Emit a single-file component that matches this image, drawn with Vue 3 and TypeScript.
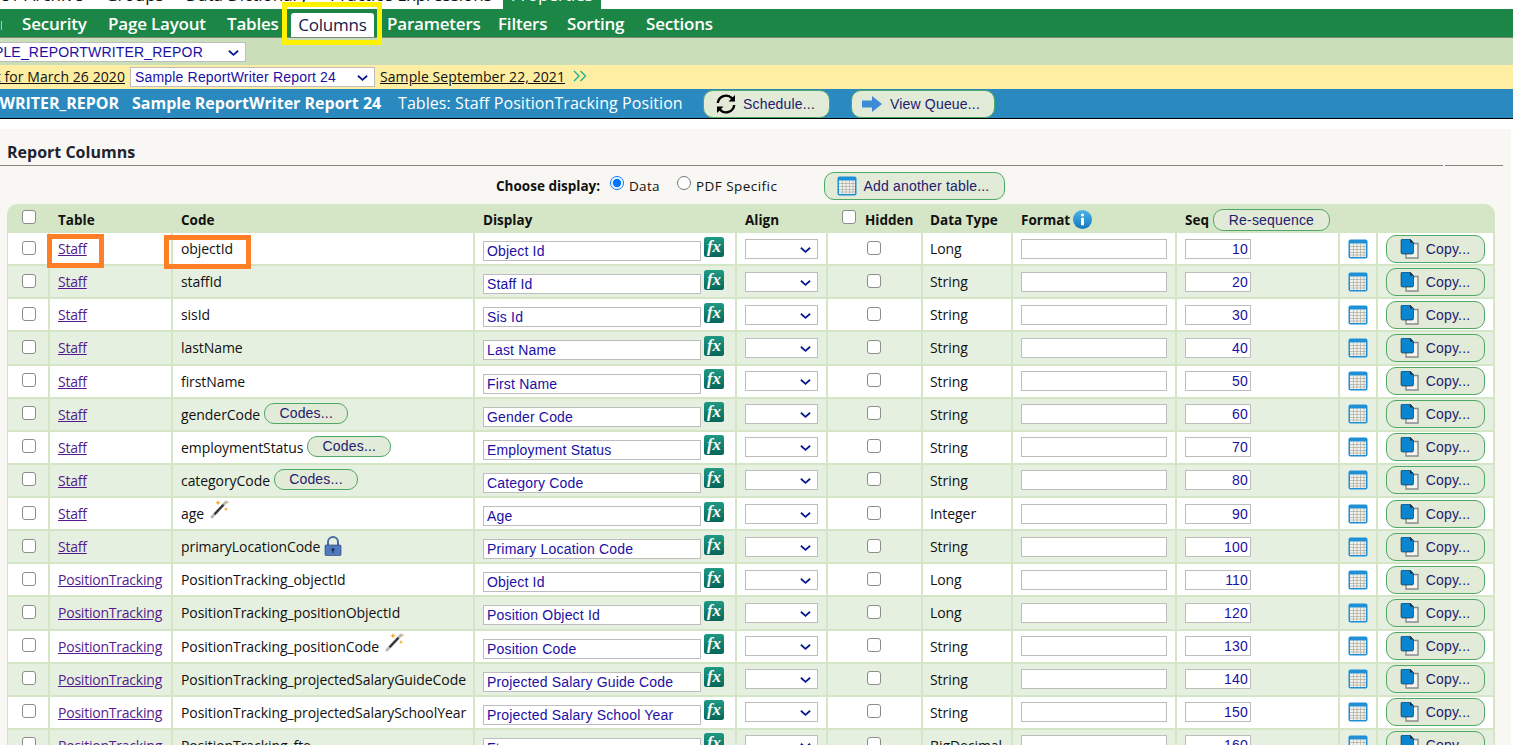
<script setup lang="ts">
interface Row {
  table: string
  code: string
  display: string
  type: string
  seq: number
  extra?: 'codes' | 'wand' | 'lock'
}
const P = 'PositionTracking'
const rows: Row[] = [
  { table: 'Staff', code: 'objectId', display: 'Object Id', type: 'Long', seq: 10 },
  { table: 'Staff', code: 'staffId', display: 'Staff Id', type: 'String', seq: 20 },
  { table: 'Staff', code: 'sisId', display: 'Sis Id', type: 'String', seq: 30 },
  { table: 'Staff', code: 'lastName', display: 'Last Name', type: 'String', seq: 40 },
  { table: 'Staff', code: 'firstName', display: 'First Name', type: 'String', seq: 50 },
  { table: 'Staff', code: 'genderCode', display: 'Gender Code', type: 'String', seq: 60, extra: 'codes' },
  { table: 'Staff', code: 'employmentStatus', display: 'Employment Status', type: 'String', seq: 70, extra: 'codes' },
  { table: 'Staff', code: 'categoryCode', display: 'Category Code', type: 'String', seq: 80, extra: 'codes' },
  { table: 'Staff', code: 'age', display: 'Age', type: 'Integer', seq: 90, extra: 'wand' },
  { table: 'Staff', code: 'primaryLocationCode', display: 'Primary Location Code', type: 'String', seq: 100, extra: 'lock' },
  { table: P, code: P + '_objectId', display: 'Object Id', type: 'Long', seq: 110 },
  { table: P, code: P + '_positionObjectId', display: 'Position Object Id', type: 'Long', seq: 120 },
  { table: P, code: P + '_positionCode', display: 'Position Code', type: 'String', seq: 130, extra: 'wand' },
  { table: P, code: P + '_projectedSalaryGuideCode', display: 'Projected Salary Guide Code', type: 'String', seq: 140 },
  { table: P, code: P + '_projectedSalarySchoolYear', display: 'Projected Salary School Year', type: 'String', seq: 150 },
  { table: P, code: P + '_fte', display: 'Fte', type: 'BigDecimal', seq: 160 }
]
const navItems = [
  { label: 'Security', w: 66 },
  { label: 'Page Layout', w: 99 },
  { label: 'Tables', w: 51 }
]
const navItemsAfter = [
  { label: 'Parameters', w: 91 },
  { label: 'Filters', w: 49 },
  { label: 'Sorting', w: 59 },
  { label: 'Sections', w: 68 }
]
</script>

<template>
  <div class="page">
    <svg class="defs" width="0" height="0" aria-hidden="true">
      <defs>
        <linearGradient id="fxg" x1="0" y1="0" x2="0" y2="1">
          <stop offset="0" stop-color="#1f9a84" />
          <stop offset="1" stop-color="#05665a" />
        </linearGradient>
        <linearGradient id="infog" x1="0" y1="0" x2="0" y2="1">
          <stop offset="0" stop-color="#4eb4ea" />
          <stop offset="1" stop-color="#1276bb" />
        </linearGradient>
        <symbol id="cal" viewBox="0 0 20 20">
          <rect x="0.5" y="0.5" width="19" height="19" rx="2" fill="#1f8fd6" />
          <rect x="2" y="4.5" width="16" height="13.5" fill="#f3f3ee" />
          <path d="M2 7.5h16M2 10.5h16M2 13.5h16M2 16h16M5.5 4.5v13.5M9 4.5v13.5M12.5 4.5v13.5M16 4.5v13.5" stroke="#a9a99f" stroke-width="0.7" fill="none" />
        </symbol>
        <symbol id="copy" viewBox="0 0 20 20">
          <path d="M6 4.500h12v14.500H6z" fill="#f4f4f0" stroke="#8b8b8b" stroke-width="1.400" />
          <path d="M1 1.500a1.500 1.500 0 0 1 1.500-1.500H10l3.500 3.500v10a1.500 1.500 0 0 1-1.500 1.500H2.500a1.500 1.500 0 0 1-1.500-1.500z" fill="#0a86d0" stroke="#123" stroke-width="0.6" />
          <path d="M10 0l3.500 3.500H10z" fill="#1b2b3a" />
        </symbol>
        <symbol id="wand" viewBox="0 0 20 20">
          <path d="M2 18L16 3" stroke="#b9b9b9" stroke-width="3" stroke-linecap="round" />
          <path d="M4.500 15.300L13.500 5.700" stroke="#333" stroke-width="2.200" />
          <path d="M8 1l.8 2 2 .8-2 .8-.8 2-.8-2-2-.8 2-.8zM16 8l.6 1.500 1.500.6-1.500.6-.6 1.500-.6-1.500-1.500-.6 1.500-.6zM18 2l.4 1 1 .4-1 .4-.4 1-.4-1-1-.4 1-.4z" fill="#f5a623" />
        </symbol>
        <symbol id="lock" viewBox="0 0 18 20">
          <path d="M4 9V6a5 5 0 0 1 10 0v3" fill="none" stroke="#4a6ea8" stroke-width="2" />
          <rect x="1" y="9" width="16" height="10.500" rx="1" fill="#4f7abd" stroke="#26366e" stroke-width="0.600" />
          <circle cx="9" cy="13.500" r="1.500" fill="#1f2a55" />
          <path d="M9 14v3" stroke="#1f2a55" stroke-width="1" />
        </symbol>
      </defs>
    </svg>

    <div class="topstrip">
      <span>e / Archive</span>
      <span>Groups</span>
      <span>Data Dictionary</span>
      <span>Practice Expressions</span>
      <span class="top-tab">Properties</span>
    </div>

    <nav class="nav">
      <span class="nav-clip">r</span>
      <span v-for="n in navItems" :key="n.label" class="nav-item" :style="{ width: n.w + 'px' }">{{ n.label }}</span>
      <span class="nav-active">Columns<i class="highlight"></i></span>
      <span v-for="n in navItemsAfter" :key="n.label" class="nav-item" :style="{ width: n.w + 'px' }">{{ n.label }}</span>
    </nav>

    <div class="bar-green">
      <div class="select wide">
        <span class="sel-text">SAMPLE_REPORTWRITER_REPOR</span>
        <svg class="chev" viewBox="0 0 12 8"><path d="M1 1.500l5 4.500 5-4.500" fill="none" stroke="#0a1a8c" stroke-width="2" /></svg>
      </div>
    </div>

    <div class="bar-yellow">
      <div class="clip-left crumb-wrap"><a class="crumb">Sample ReportWriter Report for March 26 2020</a></div>
      <div class="select report">
        <span class="sel-text">Sample ReportWriter Report 24</span>
        <svg class="chev" viewBox="0 0 12 8"><path d="M1 1.500l5 4.500 5-4.500" fill="none" stroke="#0a1a8c" stroke-width="2" /></svg>
      </div>
      <a class="crumb">Sample September 22, 2021</a>
      <svg class="dbl" viewBox="0 0 14 12"><path d="M1 1l5 5-5 5M7.500 1l5 5-5 5" fill="none" stroke="#1bb39a" stroke-width="1.400" /></svg>
    </div>

    <div class="bar-blue">
      <div class="clip-left b-code"><b>SAMPLE_REPORTWRITER_REPOR</b></div>
      <b class="b-name">Sample ReportWriter Report 24</b>
      <span class="b-tables">Tables: Staff PositionTracking Position</span>
      <button class="btn sched">
        <svg width="20" height="20" viewBox="0 0 20 20">
          <path d="M3 9a7 7 0 0 1 12-4l-2.500 2.500H19V1l-2.300 2.300A9.500 9.500 0 0 0 .6 9z" fill="#000" />
          <path d="M17 11a7 7 0 0 1-12 4l2.500-2.500H1V19l2.300-2.300A9.500 9.500 0 0 0 19.400 11z" fill="#000" />
        </svg>
        Schedule...
      </button>
      <button class="btn queue">
        <svg width="20" height="16" viewBox="0 0 20 16"><path d="M0 4.500h10V0l10 8-10 8v-4.500H0z" fill="#3d8bd4" /></svg>
        View Queue...
      </button>
    </div>

    <main class="panel">
      <h2 class="title">Report Columns</h2>
      <div class="rule"><i></i><i></i></div>

      <div class="options">
        <b>Choose display:</b>
        <label class="opt first-opt"><input type="radio" name="d" checked />Data</label>
        <label class="opt second-opt"><input type="radio" name="d" />PDF Specific</label>
        <button class="btn add">
          <svg width="20" height="20"><use href="#cal" /></svg>
          Add another table...
        </button>
      </div>

      <section class="grid">
        <div class="row head">
          <div class="c center first"><input type="checkbox" class="cb" /></div>
          <div class="c lab">Table</div>
          <div class="c lab">Code</div>
          <div class="c lab">Display</div>
          <div class="c lab">Align</div>
          <div class="c lab hid"><input type="checkbox" class="cb" />Hidden</div>
          <div class="c lab dtype">Data Type</div>
          <div class="c lab">
            Format
            <svg class="info" width="19" height="19" viewBox="0 0 19 19">
              <circle cx="9.500" cy="9.500" r="9.500" fill="url(#infog)" />
              <circle cx="9.500" cy="5" r="1.600" fill="#fff" />
              <rect x="8" y="7.800" width="3" height="7.500" fill="#fff" />
            </svg>
          </div>
          <div class="c lab seqh">Seq<button class="btn reseq">Re-sequence</button></div>
          <div class="c"></div>
          <div class="c"></div>
        </div>

        <div v-for="(r, i) in rows" :key="r.seq" class="row" :class="i % 2 ? 'alt' : 'plain'">
          <div class="c center first"><input type="checkbox" class="cb" /></div>
          <div class="c">
            <a class="tlink">{{ r.table }}</a>
            <i v-if="i === 0" class="mark mark-table"></i>
          </div>
          <div class="c code">
            <span>{{ r.code }}</span>
            <button v-if="r.extra === 'codes'" class="btn codes">Codes...</button>
            <svg v-else-if="r.extra === 'wand'" class="wand" width="20" height="20"><use href="#wand" /></svg>
            <svg v-else-if="r.extra === 'lock'" class="lock" width="18" height="20"><use href="#lock" /></svg>
            <i v-if="i === 0" class="mark mark-code"></i>
          </div>
          <div class="c disp">
            <input class="txt dinput" :value="r.display" />
            <svg class="fx" width="20" height="20" viewBox="0 0 20 20">
              <rect width="20" height="20" rx="2.500" fill="url(#fxg)" />
              <text x="10" y="15" text-anchor="middle" class="fxt">fx</text>
            </svg>
          </div>
          <div class="c"><div class="select align"><svg class="chev" viewBox="0 0 12 8"><path d="M1 1.500l5 4.500 5-4.500" fill="none" stroke="#0a1a8c" stroke-width="2" /></svg></div></div>
          <div class="c center hidc"><input type="checkbox" class="cb" /></div>
          <div class="c dtype">{{ r.type }}</div>
          <div class="c"><input class="txt finput" /></div>
          <div class="c"><input class="txt sinput" :value="r.seq" /></div>
          <div class="c center"><svg width="20" height="20"><use href="#cal" /></svg></div>
          <div class="c center">
            <button class="btn copy">
              <svg width="20" height="20"><use href="#copy" /></svg>
              Copy...
            </button>
          </div>
        </div>
      </section>
    </main>
  </div>
</template>

<style scoped>
.page {
  width: 1513px;
  height: 745px;
  overflow: hidden;
  background: #fff;
  font-family: "Open Sans", "Noto Sans", sans-serif;
  font-size: 14px;
  letter-spacing: -0.07px;
  color: #111;
  position: relative;
}
.defs { position: absolute; }
.topstrip {
  height: 9px;
  overflow: hidden;
  display: flex;
  align-items: flex-end;
  font-size: 17px;
  letter-spacing: 0;
  line-height: 20px;
  color: #111;
  white-space: nowrap;
}
.topstrip span { margin-right: 22px; margin-bottom: 4px; }
.topstrip span:nth-child(4) { margin-right: 11px; }
.topstrip .top-tab {
  background: #1c8646;
  color: #fff;
  padding: 0 0 4px;
  margin: 0;
  width: 98px;
  box-sizing: border-box;
  text-align: center;
}
.nav {
  height: 29px;
  background: #1c8646;
  border-bottom: 1px solid #7a8a76;
  box-sizing: border-box;
  display: flex;
  align-items: center;
  gap: 20px;
  color: #fff;
  font-size: 17px;
  font-weight: 600;
  letter-spacing: -0.2px;
  white-space: nowrap;
  padding-top: 1px;
}
.nav-clip { width: 2px; overflow: hidden; }
.nav-item { line-height: 27px; flex: none; }
.nav-active {
  position: relative;
  background: #fff;
  color: #14204a;
  font-weight: 400;
  border-radius: 3px 3px 0 0;
  height: 24px;
  line-height: 24px;
  width: 83px;
  text-align: center;
  margin: 3px -7px 0 -7px;
  align-self: flex-start;
  flex: none;
}
.highlight {
  position: absolute;
  left: -9px;
  top: -11px;
  width: 100px;
  height: 43px;
  box-sizing: border-box;
  border: 5px solid #fff200;
  pointer-events: none;
}
.bar-green {
  height: 27px;
  background: #cbdeba;
  display: flex;
  align-items: center;
  padding-top: 1px;
  box-sizing: border-box;
}
.select {
  background: #fff;
  border: 1px solid #bdbdbd;
  box-sizing: border-box;
  height: 20px;
  display: flex;
  align-items: center;
  font-family: "Liberation Sans", Arial, sans-serif;
  color: #1b0fa5;
  font-size: 14px;
  letter-spacing: 0.18px;
  position: relative;
  white-space: nowrap;
  overflow: hidden;
  flex: none;
}
.chev {
  position: absolute;
  right: 6px;
  top: 6px;
  width: 11px;
  height: 8px;
}
.select.wide { width: 287px; margin-left: -41px; padding-left: 3px; }
.bar-yellow {
  height: 24px;
  background: #fdeea3;
  display: flex;
  align-items: center;
  white-space: nowrap;
  font-size: 14px;
  letter-spacing: 0;
  overflow: hidden;
}
.clip-left {
  display: flex;
  justify-content: flex-end;
  overflow: hidden;
  flex: none;
  white-space: nowrap;
}
.crumb-wrap { width: 125px; margin-top: -1px; }
.crumb { color: #111; text-decoration: underline; flex: none; margin-top: -1px; letter-spacing: 0.08px; }
.crumb-wrap .crumb { margin-top: 0; }
.select.report { width: 245px; margin: 0 5px; padding-left: 4px; height: 20px; }
.dbl { width: 14px; height: 12px; margin-left: 8px; margin-top: -2px; }
.bar-blue {
  height: 30px;
  background: #2a8abf;
  border-bottom: 1px solid #000;
  box-sizing: border-box;
  display: flex;
  align-items: center;
  color: #fff;
  font-size: 16px;
  letter-spacing: 0;
  white-space: nowrap;
  overflow: hidden;
}
.b-code { width: 119px; margin-top: -2px; }
.b-code b { flex: none; }
.b-name { margin-left: 13px; width: 250px; flex: none; margin-top: -2px; }
.b-tables { margin-left: 16px; width: 285px; flex: none; letter-spacing: 0.07px; margin-top: -2px; }
.btn {
  font-family: "Liberation Sans", Arial, sans-serif;
  font-size: 14px;
  letter-spacing: 0.18px;
  color: #23206e;
  background: #e2ead8;
  border: 1px solid #4fa865;
  border-radius: 10px;
  display: inline-flex;
  align-items: center;
  justify-content: center;
  padding: 0;
  box-sizing: border-box;
  white-space: nowrap;
}
.sched { width: 127px; height: 28px; margin-left: 20px; gap: 7px; flex: none; padding-right: 2px; }
.queue { width: 144px; height: 28px; margin-left: 21px; gap: 8px; flex: none; padding-right: 4px; }
.panel {
  background: #f8f7f3;
  margin: 10px 2px 0 0;
  height: 617px;
  padding-top: 10px;
  box-sizing: border-box;
  overflow: hidden;
}
.title {
  margin: 0;
  padding-left: 7px;
  font-size: 16px;
  font-weight: 700;
  line-height: 26px;
  letter-spacing: 0;
  color: #1d2430;
}
.rule { display: flex; gap: 2px; width: 1503px; height: 1px; }
.rule i { background: #85857d; height: 1px; width: 1443px; }
.rule i + i { width: 58px; }
.options {
  height: 38px;
  display: flex;
  align-items: center;
  padding-left: 496px;
  font-size: 13.5px;
  letter-spacing: 0;
  white-space: nowrap;
}
.options b { width: 108px; flex: none; font-weight: 700; margin-top: 2px; }
.opt { display: flex; align-items: center; gap: 5px; margin-top: 2px; flex: none; letter-spacing: 0.3px; }
.opt input { margin: 0 0 6px; width: 14px; height: 14px; }
.first-opt { margin-left: 6px; width: 67px; }
.second-opt { width: 147px; letter-spacing: 0.45px; }
.add { width: 181px; height: 28px; gap: 7px; margin-top: 2px; flex: none; padding-right: 3px; }
.grid {
  margin-left: 7px;
  width: 1488px;
  background: #d4e6c6;
  border-radius: 10px 10px 0 0;
  padding: 0 1px;
  box-sizing: border-box;
}
.row {
  display: grid;
  grid-template-columns: 40px 121px 300px 260px 89px 93px 88px 162px 161px 36px 115px;
  column-gap: 2px;
  height: 33.13px;
  padding-bottom: 2px;
  box-sizing: border-box;
}
.row.head { height: 29px; padding: 0; }
.c {
  display: flex;
  align-items: center;
  padding-left: 8px;
  white-space: nowrap;
  box-sizing: border-box;
  min-width: 0;
  position: relative;
}
.plain .c { background: #fff; }
.alt .c { background: #e6f0e0; }
.center { justify-content: center; padding-left: 0; }
.first { padding-left: 2px; }
.lab { font-weight: 700; font-size: 13.5px; letter-spacing: 0; color: #111; padding-top: 3px; }
.dtype { padding-left: 7px; }
.cb {
  appearance: none;
  margin: 0 0 2px;
  width: 14px;
  height: 14px;
  box-sizing: border-box;
  background: #fff;
  border: 1.5px solid #8c8c8c;
  border-radius: 3px;
}
.lab .cb { margin-bottom: 7px; }
.head .first .cb { margin-bottom: 3px; }
.hid { padding-left: 14px; gap: 9px; }
.hidc { padding-right: 1px; }
.tlink { color: #551a8b; text-decoration: underline; letter-spacing: -0.22px; }
.mark {
  position: absolute;
  z-index: 2;
  box-sizing: border-box;
  border: 5px solid #ff7f27;
  pointer-events: none;
  height: 34px;
}
.mark-table { left: -3px; top: 1px; width: 57px; }
.mark-code { left: -9px; top: 2px; width: 87px; }
.codes { height: 21px; width: 84px; margin-left: 4px; margin-top: -2px; }
.wand { margin: -9px 0 0 6px; }
.lock { margin: -2px 0 0 4px; }
.txt {
  font-family: "Liberation Sans", Arial, sans-serif;
  font-size: 14px;
  letter-spacing: 0.18px;
  color: #1b0fa5;
  border: 1px solid #bdbdbd;
  background: #fff;
  height: 20px;
  box-sizing: border-box;
  padding: 1px 2px;
  outline: none;
  margin: 0;
}
.dinput { width: 218px; margin-top: 5px; padding-left: 3px; }
.fx { margin: -4px 0 0 3px; flex: none; }
.fxt {
  font-family: "Liberation Serif", serif;
  font-style: italic;
  font-weight: 700;
  font-size: 17px;
  fill: #fff;
}
.select.align { width: 73px; }
.finput { width: 146px; }
.sinput { width: 66px; text-align: right; }
.seqh { gap: 4px; }
.reseq { width: 117px; height: 22px; font-weight: 400; }
.info { margin-left: 3px; margin-top: -1px; }
.copy { width: 99px; height: 28px; gap: 6px; padding-right: 1px; }
</style>

<style>
html, body { margin: 0; overflow: hidden; }
</style>
